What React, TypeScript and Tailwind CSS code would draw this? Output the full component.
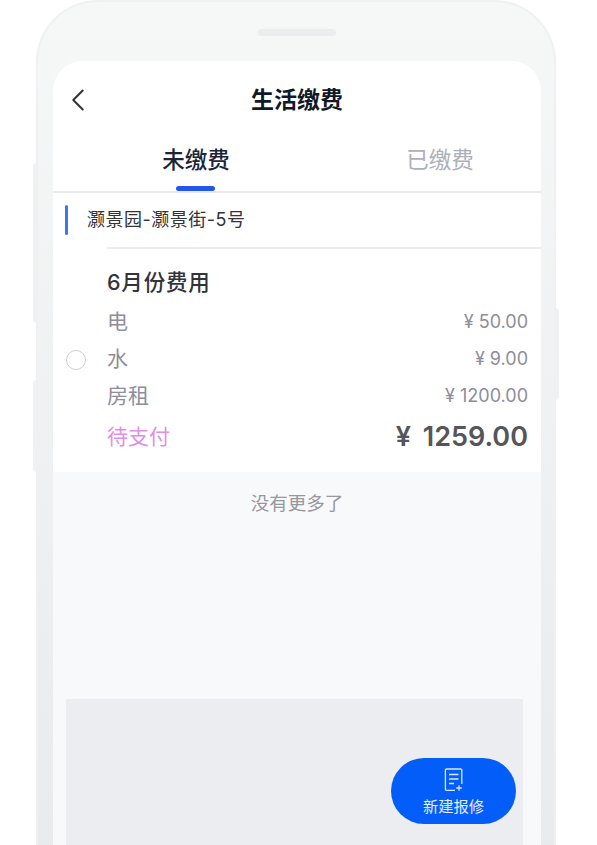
import { ChevronLeft } from "lucide-react";

const CJK = "font-['Inter','Noto_Sans_CJK_SC',sans-serif]";

/* ─── Fee row ────────────────────────────────────────────────── */
function FeeRow({ label, amount }: { label: string; amount: string }) {
  return (
    <div className="flex items-center justify-between h-[37px]">
      <span className="text-[21px] text-[#8d8d9b]">{label}</span>
      <span className="text-[18px] text-[#8d8d9b]">{amount}</span>
    </div>
  );
}

function ReportIcon() {
  return (
    <svg width="20" height="24" viewBox="0 0 20 24" fill="none" stroke="#dbe7ff" strokeWidth="1.3">
      <path d="M11 22.3H2.6a1.2 1.2 0 0 1-1.2-1.2V2.2A1.2 1.2 0 0 1 2.6 1h14a1.2 1.2 0 0 1 1.2 1.2V16" />
      <path d="M5 6.5h9.5M5 11h9.5M5 15.5h5M15 17.2v5.6M12.2 20h5.6" />
    </svg>
  );
}

export default function App() {
  return (
    <div className={`relative h-[845px] w-[597px] overflow-hidden bg-white pl-[36px] ${CJK}`}>
      {/* Side buttons */}
      <div className="absolute left-[33px] top-[163px] h-[160px] w-[4px] rounded-l-sm bg-[#f0f1f3]" />
      <div className="absolute left-[33px] top-[380px] h-[92px] w-[4px] rounded-l-sm bg-[#f0f1f3]" />
      <div className="absolute left-[555px] top-[308px] h-[92px] w-[4px] rounded-r-sm bg-[#f0f1f3]" />

      {/* Phone body */}
      <div className="relative flex h-[880px] w-[520px] flex-col rounded-t-[62px] border-x-2 border-t-2 border-[#eff0f1] bg-gradient-to-b from-[#f6f7f7] to-[#e9eaec] pl-[15px] pr-[13px]">
        <div className="ml-[205px] mt-[27px] h-[7px] w-[78px] rounded-full bg-[#ebecee]" />

        {/* Screen */}
        <div className="relative mt-[25px] flex flex-1 flex-col overflow-hidden rounded-t-[30px] bg-[#f8f9fb]">
          <div className="bg-white">
            <div className="relative flex h-[78px] items-center justify-center">
              <ChevronLeft className="absolute left-[6px] top-[20px] h-[38px] w-[38px] text-[#33333a]" strokeWidth={1.25} />
              <span className="text-[23px] font-semibold text-[#111827]">生活缴费</span>
            </div>

            {/* Tabs */}
            <div className="flex h-[54px] border-b-2 border-[#e9e9ec]">
              <div className="relative flex w-[286px] justify-center">
                <span className="text-[22.5px] font-medium leading-[42px] text-[#1c2438]">未缴费</span>
                <div className="absolute bottom-0 left-[123px] h-[5px] w-[39px] rounded-full bg-[#2457e8]" />
              </div>
              <div className="flex flex-1 justify-center">
                <span className="text-[22.5px] leading-[42px] text-[#adb0bb]">已缴费</span>
              </div>
            </div>

            {/* Address */}
            <div className="flex h-[54px] items-center pl-[12px]">
              <div className="h-[30px] w-[3px] rounded-sm bg-[#3a78ee]" />
              <span className="ml-[19px] pb-[2px] text-[18px] tracking-[0.5px] text-[#333338]">灏景园-灏景街-5号</span>
            </div>

            {/* Bill */}
            <div className="ml-[54px] border-t-2 border-[#ececef]">
              <div className="flex h-[223px] items-stretch">
                <div className="relative flex-1 pr-[13px] pt-[17px]">
                  <div className="h-[32px] text-[21.5px] font-medium leading-[32px] tracking-[0.8px] text-[#33333a]">6月份费用</div>
                  <div className="mt-[5px]">
                    <FeeRow label="电" amount="¥ 50.00" />
                    <FeeRow label="水" amount="¥ 9.00" />
                    <FeeRow label="房租" amount="¥ 1200.00" />
                  </div>
                  <div className="flex h-[46px] items-center justify-between">
                    <span className="text-[21px] text-[#e08ee6]">待支付</span>
                    <span className="text-[27px] font-semibold text-[#55555a] [word-spacing:5px]">¥ 1259.00</span>
                  </div>
                  {/* Radio */}
                  <div className="absolute -left-[41px] top-[101px] h-[20px] w-[20px] rounded-full border-[1.5px] border-[#d0d0d4] bg-white" />
                </div>
              </div>
            </div>
          </div>

          <p className="mt-[18px] text-center text-[18.5px] text-[#97979f]">没有更多了</p>

          {/* Grey block */}
          <div className="ml-[13px] mr-[18px] mt-[181px] flex-1 bg-[#ecedf0]" />

          {/* Floating action button */}
          <div className="absolute left-[338px] top-[697px] flex h-[66px] w-[125px] flex-col items-center rounded-full bg-[#035df8] pt-[10px]">
            <ReportIcon />
            <span className="mt-[5px] text-[15.25px] leading-[20px] text-[#e6eeff]">新建报修</span>
          </div>
        </div>
      </div>
    </div>
  );
}
